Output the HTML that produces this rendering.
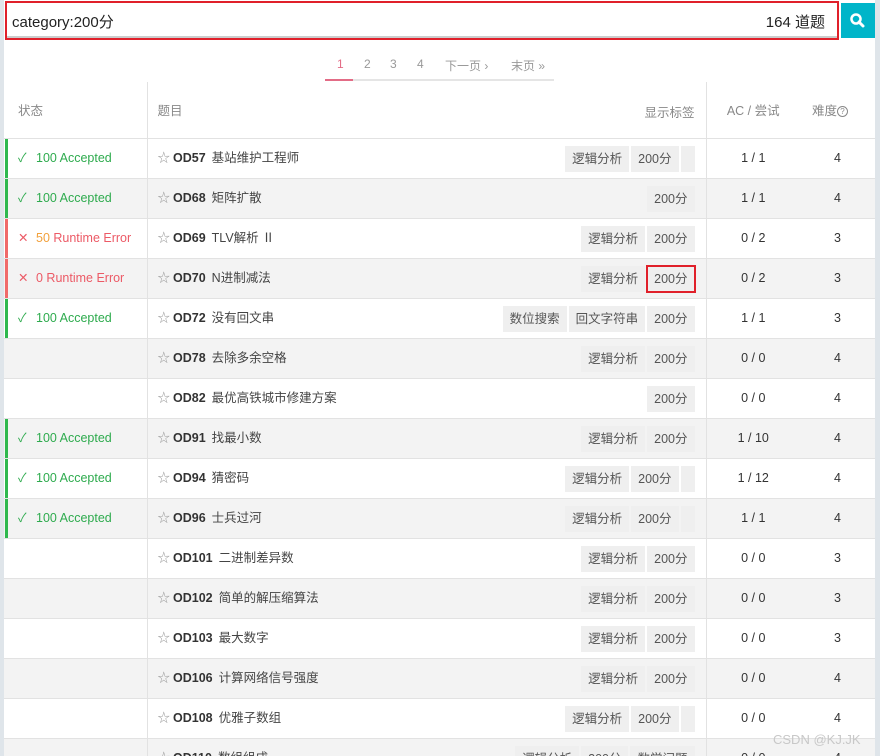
<!DOCTYPE html>
<html><head><meta charset="utf-8"><style>
*{box-sizing:border-box}
body{margin:0;width:880px;height:756px;overflow:hidden;background:#dfe5ea;font-family:"Liberation Sans","Noto Sans CJK SC",sans-serif;color:#333;}
.wrap{position:absolute;left:4px;top:0;width:871px;height:756px;background:#fff;overflow:hidden}
.search{position:absolute;left:1px;top:1px;width:834px;height:39px;border:2px solid #e0202a;background:#fff;}
.search .q{position:absolute;left:5px;top:8px;font-size:15px;color:#222;}
.search .n{position:absolute;right:12px;top:8px;font-size:15px;color:#222;}
.search:after{content:"";position:absolute;left:0;right:0;bottom:0;border-bottom:2px solid #ccc}
.btn{position:absolute;left:837px;top:3px;width:34px;height:35px;background:#00b5c9;}
.pg{position:absolute;left:321px;top:53px;width:229px;height:28px;border-bottom:2px solid #e5e5e5;font-size:12px;color:#999;}
.pg span{position:absolute;top:4px}
.pg .act{color:#e36c86;}
.pg .ul{position:absolute;left:0;bottom:-2px;width:28px;height:2px;background:#e36c86}
table{position:absolute;left:0;top:82px;border-collapse:collapse;width:871px;font-size:12.5px;table-layout:fixed}
td,th{border-bottom:1px solid #e2e2e2;height:39px;padding:0;white-space:nowrap;overflow:hidden}
th{height:56px;font-weight:normal;color:#888;text-align:left}
.s{border-right:1px solid #e2e2e2}
.t{border-right:1px solid #e2e2e2}
td.a,th.a{text-align:center}
td.d{text-align:center;color:#333}
tr.g td{background:#f3f3f3}
.st{position:relative;padding-left:14px;height:39px;line-height:39px}
.bar{position:absolute;left:1px;top:0;width:3px;height:40px}
.ok{color:#2eab4e}.er{color:#ec5a66}.or{color:#f2a13c}
.ic{display:inline-block;width:14px;margin-right:4px}
.title{padding-left:10px;line-height:39px;position:relative;color:#444;height:39px}
.title b{color:#333;margin-right:6px}
.star{color:#999;margin-right:3px;font-size:12.5px}
.tags{position:absolute;right:11px;top:7px;display:flex;gap:2px}
.tag{background:#efefef;height:26px;line-height:26px;padding:0 7px;color:#555;font-size:12.5px}
.tag.e{width:14px;padding:0}
.tag.r{outline:2px solid #e0202a;outline-offset:-1px}
</style></head><body>
<div class="wrap">
<div class="search"><span class="q">category:200分</span><span class="n">164 道题</span></div>
<div class="btn"><svg width="34" height="35"><circle cx="15" cy="16" r="4.5" fill="none" stroke="#fff" stroke-width="2.5"/><line x1="18" y1="19" x2="22" y2="23" stroke="#fff" stroke-width="3" stroke-linecap="round"/></svg></div>
<div class="pg"><span class="act" style="left:12px">1</span><span style="left:39px">2</span><span style="left:65px">3</span><span style="left:92px">4</span><span style="left:120px">下一页 ›</span><span style="left:186px">末页 »</span><div class="ul"></div></div>
<table>
<colgroup><col style="width:143px"><col style="width:559px"><col style="width:94px"><col style="width:75px"></colgroup>
<tr><th class="s" style="padding-left:14px">状态</th><th class="t" style="padding-left:10px;position:relative">题目<span style="position:absolute;right:11px;top:20px">显示标签</span></th><th class="a">AC / 尝试</th><th style="text-align:left;padding-left:12px">难度<span style="display:inline-block;width:11px;height:11px;border:1px solid #888;border-radius:50%;font-size:8px;line-height:9px;text-align:center;vertical-align:1px">?</span></th></tr>
<tr><td class="s"><div class="st ok"><div class="bar" style="background:#2eb84e"></div><span class="ic">✓</span>100 Accepted</div></td><td class="t"><div class="title"><span class="star">☆</span><b>OD57</b>基站维护工程师<div class="tags"><span class="tag">逻辑分析</span><span class="tag">200分</span><span class="tag e"></span></div></div></td><td class="a">1 / 1</td><td class="d">4</td></tr>
<tr class="g"><td class="s"><div class="st ok"><div class="bar" style="background:#2eb84e"></div><span class="ic">✓</span>100 Accepted</div></td><td class="t"><div class="title"><span class="star">☆</span><b>OD68</b>矩阵扩散<div class="tags"><span class="tag">200分</span></div></div></td><td class="a">1 / 1</td><td class="d">4</td></tr>
<tr><td class="s"><div class="st er"><div class="bar" style="background:#f06a6a"></div><span class="ic">✕</span><span class="or">50</span> Runtime Error</div></td><td class="t"><div class="title"><span class="star">☆</span><b>OD69</b>TLV解析 Ⅱ<div class="tags"><span class="tag">逻辑分析</span><span class="tag">200分</span></div></div></td><td class="a">0 / 2</td><td class="d">3</td></tr>
<tr class="g"><td class="s"><div class="st er"><div class="bar" style="background:#f06a6a"></div><span class="ic">✕</span>0 Runtime Error</div></td><td class="t"><div class="title"><span class="star">☆</span><b>OD70</b>N进制减法<div class="tags"><span class="tag">逻辑分析</span><span class="tag r">200分</span></div></div></td><td class="a">0 / 2</td><td class="d">3</td></tr>
<tr><td class="s"><div class="st ok"><div class="bar" style="background:#2eb84e"></div><span class="ic">✓</span>100 Accepted</div></td><td class="t"><div class="title"><span class="star">☆</span><b>OD72</b>没有回文串<div class="tags"><span class="tag">数位搜索</span><span class="tag">回文字符串</span><span class="tag">200分</span></div></div></td><td class="a">1 / 1</td><td class="d">3</td></tr>
<tr class="g"><td class="s"></td><td class="t"><div class="title"><span class="star">☆</span><b>OD78</b>去除多余空格<div class="tags"><span class="tag">逻辑分析</span><span class="tag">200分</span></div></div></td><td class="a">0 / 0</td><td class="d">4</td></tr>
<tr><td class="s"></td><td class="t"><div class="title"><span class="star">☆</span><b>OD82</b>最优高铁城市修建方案<div class="tags"><span class="tag">200分</span></div></div></td><td class="a">0 / 0</td><td class="d">4</td></tr>
<tr class="g"><td class="s"><div class="st ok"><div class="bar" style="background:#2eb84e"></div><span class="ic">✓</span>100 Accepted</div></td><td class="t"><div class="title"><span class="star">☆</span><b>OD91</b>找最小数<div class="tags"><span class="tag">逻辑分析</span><span class="tag">200分</span></div></div></td><td class="a">1 / 10</td><td class="d">4</td></tr>
<tr><td class="s"><div class="st ok"><div class="bar" style="background:#2eb84e"></div><span class="ic">✓</span>100 Accepted</div></td><td class="t"><div class="title"><span class="star">☆</span><b>OD94</b>猜密码<div class="tags"><span class="tag">逻辑分析</span><span class="tag">200分</span><span class="tag e"></span></div></div></td><td class="a">1 / 12</td><td class="d">4</td></tr>
<tr class="g"><td class="s"><div class="st ok"><div class="bar" style="background:#2eb84e"></div><span class="ic">✓</span>100 Accepted</div></td><td class="t"><div class="title"><span class="star">☆</span><b>OD96</b>士兵过河<div class="tags"><span class="tag">逻辑分析</span><span class="tag">200分</span><span class="tag e"></span></div></div></td><td class="a">1 / 1</td><td class="d">4</td></tr>
<tr><td class="s"></td><td class="t"><div class="title"><span class="star">☆</span><b>OD101</b>二进制差异数<div class="tags"><span class="tag">逻辑分析</span><span class="tag">200分</span></div></div></td><td class="a">0 / 0</td><td class="d">3</td></tr>
<tr class="g"><td class="s"></td><td class="t"><div class="title"><span class="star">☆</span><b>OD102</b>简单的解压缩算法<div class="tags"><span class="tag">逻辑分析</span><span class="tag">200分</span></div></div></td><td class="a">0 / 0</td><td class="d">3</td></tr>
<tr><td class="s"></td><td class="t"><div class="title"><span class="star">☆</span><b>OD103</b>最大数字<div class="tags"><span class="tag">逻辑分析</span><span class="tag">200分</span></div></div></td><td class="a">0 / 0</td><td class="d">3</td></tr>
<tr class="g"><td class="s"></td><td class="t"><div class="title"><span class="star">☆</span><b>OD106</b>计算网络信号强度<div class="tags"><span class="tag">逻辑分析</span><span class="tag">200分</span></div></div></td><td class="a">0 / 0</td><td class="d">4</td></tr>
<tr><td class="s"></td><td class="t"><div class="title"><span class="star">☆</span><b>OD108</b>优雅子数组<div class="tags"><span class="tag">逻辑分析</span><span class="tag">200分</span><span class="tag e"></span></div></div></td><td class="a">0 / 0</td><td class="d">4</td></tr>
<tr class="g"><td class="s"></td><td class="t"><div class="title"><span class="star">☆</span><b>OD110</b>数组组成<div class="tags"><span class="tag">逻辑分析</span><span class="tag">200分</span><span class="tag">数学问题</span></div></div></td><td class="a">0 / 0</td><td class="d">4</td></tr>
</table>
</div>
<div style="position:absolute;left:773px;top:732px;font-size:13px;color:#c8c8c8">CSDN @KJ.JK</div>
</body></html>
